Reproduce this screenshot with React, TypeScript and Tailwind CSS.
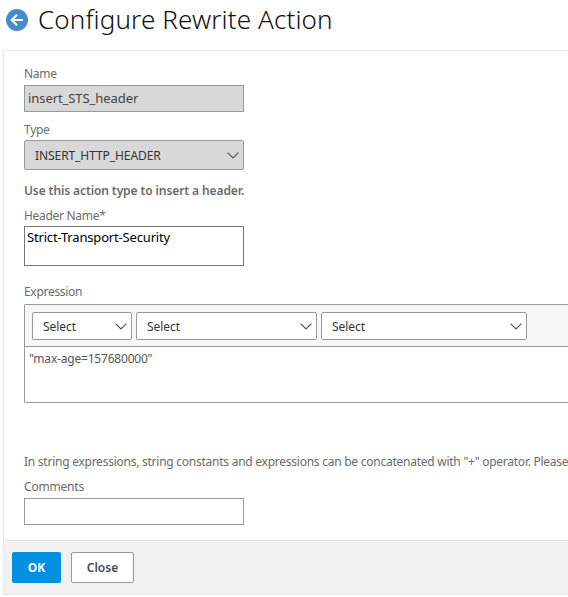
import React from "react";

function Chevron() {
  return (
    <svg className="h-[7px] w-[12px] shrink-0" viewBox="0 0 12 7" fill="none" stroke="#4a505c" strokeWidth="1.1">
      <path d="M.6.6 6 6 11.4.6" />
    </svg>
  );
}

type SelectProps = { label: string; box: string; text?: string };

function Select({ label, box, text = "tracking-[-0.05px]" }: SelectProps) {
  return (
    <button
      type="button"
      className={`flex items-center justify-between rounded-[2px] border border-[#999] pr-[4px] pl-[10px] text-[12px] text-[#333] ${box}`}
    >
      <span className={`pt-[2px] ${text}`}>{label}</span>
      <Chevron />
    </button>
  );
}

function Label({ children, className }: { children: React.ReactNode; className: string }) {
  return <label className={`block h-4 leading-4 whitespace-nowrap ${className}`}>{children}</label>;
}

export default function App() {
  return (
    <div className="h-[597px] w-[568px] overflow-hidden bg-white font-['Noto_Sans','Open_Sans',sans-serif] text-[12px] text-[#6b6b6b]">
      <header className="flex h-[50px] items-start pl-[6px]">
        <svg className="mt-[9px] h-[22px] w-[22px] shrink-0" viewBox="0 0 22 22" fill="none">
          <circle cx="11" cy="11" r="11" fill="#468ccc" />
          <path d="M17 11H6M11 5.7 5.7 11l5.3 5.3" stroke="#fff" strokeWidth="2" />
        </svg>
        <h1 className="ml-[10px] h-[38px] text-[26px] leading-[38px] font-light tracking-[0.12px] whitespace-nowrap text-[#111]">
          Configure Rewrite Action
        </h1>
      </header>

      <main className="ml-[3px] h-[545px] border border-r-0 border-[#e5e5e5]">
        <form className="h-[489px] pt-[15px] pl-[20px]">
          <Label className="tracking-[-0.3px]">Name</Label>
          <div className="mt-[3px] flex h-[27px] w-[220px] items-center border border-[#999] bg-[#d8d8d8] pl-[3px] text-[13px] text-[#444]">
            <span className="tracking-[-0.07px]">insert_STS_header</span>
          </div>
          <Label className="mt-[10px] tracking-[-0.3px]">Type</Label>
          <Select
            label="INSERT_HTTP_HEADER"
            box="mt-[2px] h-[30px] w-[220px] bg-[#d8d8d8]"
            text="tracking-[-0.08px]"
          />
          <p className="mt-[13px] h-4 leading-4 font-semibold whitespace-nowrap">
            <span className="tracking-[-0.1px]">Use this action type to insert a header.</span>
          </p>
          <Label className="mt-[9px] tracking-[-0.3px]">Header Name*</Label>
          <div className="mt-[2px] h-[40px] w-[220px] border border-[#767676] pt-[2px] pl-[2px] text-[13px] leading-4 text-black">
            <span className="tracking-[-0.17px]">Strict-Transport-Security</span>
          </div>
          <Label className="mt-[18px] tracking-[-0.3px]">Expression</Label>
          <section className="mt-[4px] h-[99px] rounded-l-[2px] border border-r-0 border-[#999]">
            <div className="flex h-[42px] gap-[4px] border-b border-[#999] bg-[#f7f7f7] pt-[7px] pl-[7px]">
              <Select label="Select" box="h-[28px] w-[100px] bg-white" />
              <Select label="Select" box="h-[28px] w-[181px] bg-white" />
              <Select label="Select" box="h-[28px] w-[206px] bg-white" />
            </div>
            <div className="pt-[4px] pl-[4px] leading-4 text-[#555]">
              <span className="tracking-[-0.2px]">"max-age=157680000"</span>
            </div>
          </section>
          <p className="mt-[51px] h-4 leading-4 whitespace-nowrap">
            <span className="tracking-[-0.25px]">
              In string expressions, string constants and expressions can be concatenated with "+" operator. Please
            </span>
          </p>
          <Label className="mt-[9px] tracking-[-0.2px]">Comments</Label>
          <div className="mt-[3px] h-[27px] w-[220px] border border-[#999]" />
        </form>
        <div className="border-t border-[#e5e5e5] py-px">
          <footer className="flex h-[52px] gap-[10px] bg-[#f1f1f1] pt-[10px] pl-[8px] font-semibold">
            <button type="button" className="h-[31px] w-[49px] rounded-[2px] bg-[#0291e0] font-bold text-white">
              OK
            </button>
            <button type="button" className="h-[31px] w-[63px] rounded-[2px] border border-[#999] bg-white text-[#444b57]">
              Close
            </button>
          </footer>
        </div>
      </main>
    </div>
  );
}
